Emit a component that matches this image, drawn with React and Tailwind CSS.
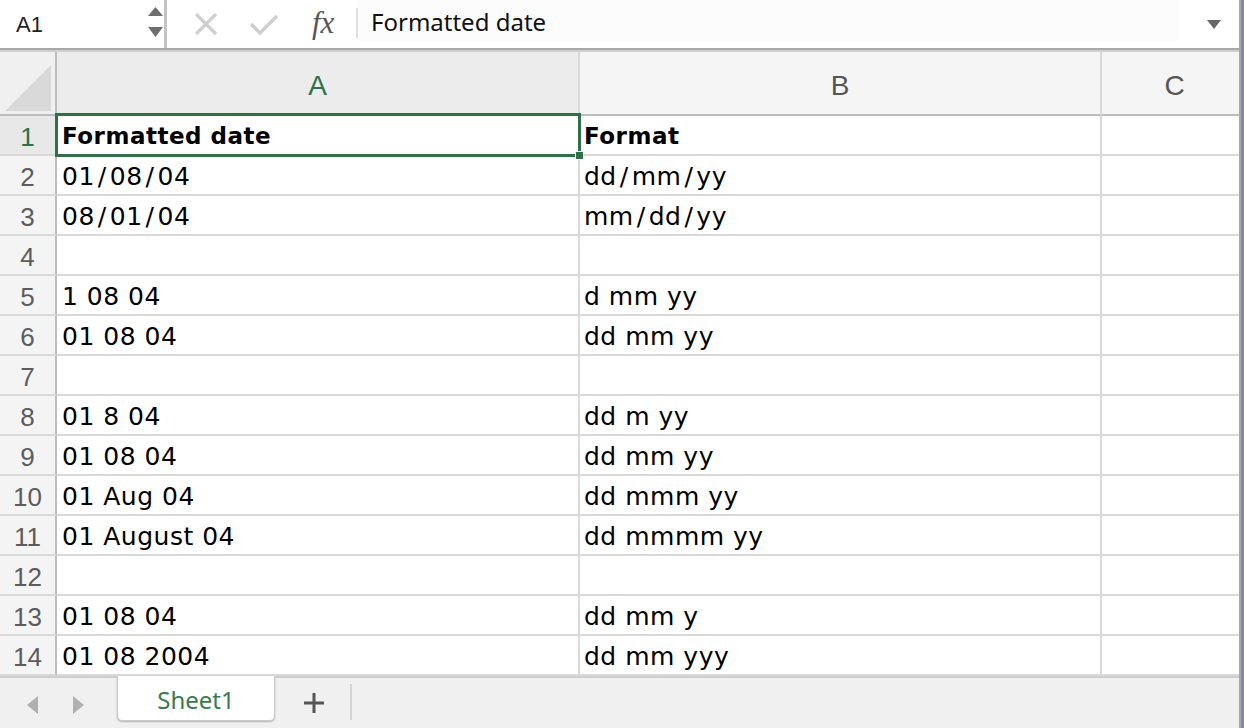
import React from "react";

const rows = [
  ["Formatted date", "Format"],
  ["01/08/04", "dd/mm/yy"],
  ["08/01/04", "mm/dd/yy"],
  ["", ""],
  ["1 08 04", "d mm yy"],
  ["01 08 04", "dd mm yy"],
  ["", ""],
  ["01 8 04", "dd m yy"],
  ["01 08 04", "dd mm yy"],
  ["01 Aug 04", "dd mmm yy"],
  ["01 August 04", "dd mmmm yy"],
  ["", ""],
  ["01 08 04", "dd mm y"],
  ["01 08 2004", "dd mm yyy"],
];

const cellFont = { fontFamily: '"DejaVu Sans", "Noto Sans CJK JP", sans-serif' };
const uiFont = { fontFamily: '"Liberation Sans", Arial, sans-serif' };

function CellText({ text, bold }) {
  const parts = text.split("/");
  return (
    <span
      className={`leading-none text-black whitespace-pre ${bold ? "font-bold text-[23px] tracking-[0.5px]" : "text-[25px] tracking-[0.5px]"}`}
    >
      {parts.map((p, i) => (
        <React.Fragment key={i}>
          {i > 0 && <span className="mx-[3px]">/</span>}
          {p}
        </React.Fragment>
      ))}
    </span>
  );
}

export default function App() {
  return (
    <div className="relative w-[1244px] h-[728px] overflow-hidden bg-[#7a8ca8]">
      <div className="relative w-[1241px] h-[728px] bg-white border-r-2 border-[#a9a9a9] flex flex-col" style={uiFont}>
        {/* Formula bar */}
        <div className="h-[52px] flex flex-col shrink-0">
          <div className="h-[48px] flex items-stretch bg-white">
            <div className="w-[164px] flex items-center pl-[16px] relative">
              <span className="text-[22px] text-[#222]">A1</span>
              <svg className="absolute left-[147px] top-[6px]" width="17" height="34" viewBox="0 0 17 34">
                <polygon points="8.5,1 16,10 1,10" fill="#6e6e6e" />
                <polygon points="1,21 16,21 8.5,31" fill="#6e6e6e" />
              </svg>
            </div>
            <div className="w-[3px] bg-[#c4c4c4]" />
            <div className="w-[190px] relative">
              <svg className="absolute left-[27px] top-[13px]" width="24" height="23" viewBox="0 0 24 23">
                <path d="M2 1 L22 21 M22 1 L2 21" stroke="#cfcfcf" strokeWidth="3.2" />
              </svg>
              <svg className="absolute left-[82px] top-[14px]" width="30" height="22" viewBox="0 0 30 22">
                <path d="M2 10 L11 19 L28 2" stroke="#cfcfcf" strokeWidth="3.4" fill="none" />
              </svg>
              <span className="absolute left-[145px] top-[3px] text-[31px] leading-[40px] italic text-[#555]" style={{ fontFamily: '"Liberation Serif", serif' }}>fx</span>
              <div className="absolute left-[189px] top-[8px] w-[2px] h-[30px] bg-[#e0e0e0]" />
            </div>
            <div className="flex-1 flex items-center justify-between pr-[18px]">
              <div className="flex-1 h-[42px] bg-[#fcfcfc] flex items-center pl-[14px] mr-[28px] self-start">
                <span className="text-[24px] text-[#111] pt-[2px]" style={{ fontFamily: '"Noto Sans", "Liberation Sans", sans-serif' }}>Formatted date</span>
              </div>
              <svg width="14" height="11" viewBox="0 0 14 11">
                <polygon points="0,1 14,1 7,10" fill="#666" />
              </svg>
            </div>
          </div>
          <div className="h-[2px] bg-[#a8a8a8]" />
          <div className="h-[2px] bg-[#d0d0d0]" />
        </div>

        {/* Column header */}
        <div className="h-[64px] flex shrink-0 bg-[#f5f5f5]">
          <div className="w-[57px] border-r-2 border-[#bdbdbd] bg-[#f0f0f0] relative border-b-2">
            <svg className="absolute left-[3px] top-[9px]" width="50" height="52" viewBox="0 0 50 52">
              <polygon points="2,50 48,4 48,50" fill="#d9d9d9" />
            </svg>
          </div>
          <div className="w-[523px] flex items-center justify-center pt-[6px] bg-[#ececec] border-r-2 border-[#dadada] border-b-[3px] border-b-[#2e7147]">
            <span className="text-[28px] leading-none text-[#2e7147]">A</span>
          </div>
          <div className="w-[522px] flex items-center justify-center pt-[6px] border-r-2 border-[#dadada] border-b-2 border-b-[#bdbdbd]">
            <span className="text-[28px] leading-none text-[#555]">B</span>
          </div>
          <div className="flex-1 flex items-center justify-center pt-[6px] pl-[8px] border-b-2 border-b-[#bdbdbd]">
            <span className="text-[28px] leading-none text-[#555]">C</span>
          </div>
        </div>

        {/* Grid */}
        <div className="flex flex-col shrink-0">
          {rows.map((r, i) => (
            <div key={i} className="h-[40px] flex">
              <div className={`w-[57px] flex items-center justify-center pt-[3px] border-r-2 border-b-2 border-r-[#bdbdbd] border-b-[#d9d9d9] ${i === 0 ? "bg-[#e8e8e8] text-[#2e7147]" : "bg-[#f4f4f4] text-[#5c5c5c]"}`}>
                <span className="text-[26px] leading-none">{i + 1}</span>
              </div>
              <div className="w-[523px] flex items-center pl-[5px] pt-[3px] border-r-2 border-b-2 border-[#d9d9d9]" style={cellFont}>
                <CellText text={r[0]} bold={i === 0} />
              </div>
              <div className="w-[522px] flex items-center pl-[4px] pt-[3px] border-r-2 border-b-2 border-[#d9d9d9]" style={cellFont}>
                <CellText text={r[1]} bold={i === 0} />
              </div>
              <div className="flex-1 border-b-2 border-[#d9d9d9]" />
            </div>
          ))}
        </div>

        {/* Tab bar */}
        <div className="flex-1 bg-[#f0f0f0] border-t-2 border-[#cdcdcd] relative">
          <svg className="absolute left-[25px] top-[17px]" width="14" height="20" viewBox="0 0 14 20">
            <polygon points="13,1 13,19 2,10" fill="#b0b0b0" />
          </svg>
          <svg className="absolute left-[72px] top-[17px]" width="14" height="20" viewBox="0 0 14 20">
            <polygon points="1,1 1,19 12,10" fill="#b0b0b0" />
          </svg>
          <div className="absolute left-[117px] top-[-2px] w-[158px] h-[45px] bg-white border border-t-0 border-[#c8c8c8] rounded-b-[5px] shadow-[0_1px_2px_rgba(0,0,0,0.25)] flex items-center justify-center pt-[3px]">
            <span className="text-[24px] text-[#3a7a50]" style={{ fontFamily: '"Noto Sans", "Liberation Sans", sans-serif' }}>Sheet1</span>
          </div>
          <svg className="absolute left-[303px] top-[14px]" width="22" height="22" viewBox="0 0 22 22">
            <path d="M11 1 V21 M1 11 H21" stroke="#555" strokeWidth="3" />
          </svg>
          <div className="absolute left-[350px] top-[6px] w-[2px] h-[36px] bg-[#d5d5d5]" />
        </div>

        {/* Selection */}
        <div className="absolute left-[55px] top-[113px] w-[526px] h-[44px] border-[3px] border-[#2e7147] pointer-events-none" />
        <div className="absolute left-[575px] top-[151px] w-[9px] h-[9px] bg-[#2e7147] border border-white" />
      </div>
    </div>
  );
}
